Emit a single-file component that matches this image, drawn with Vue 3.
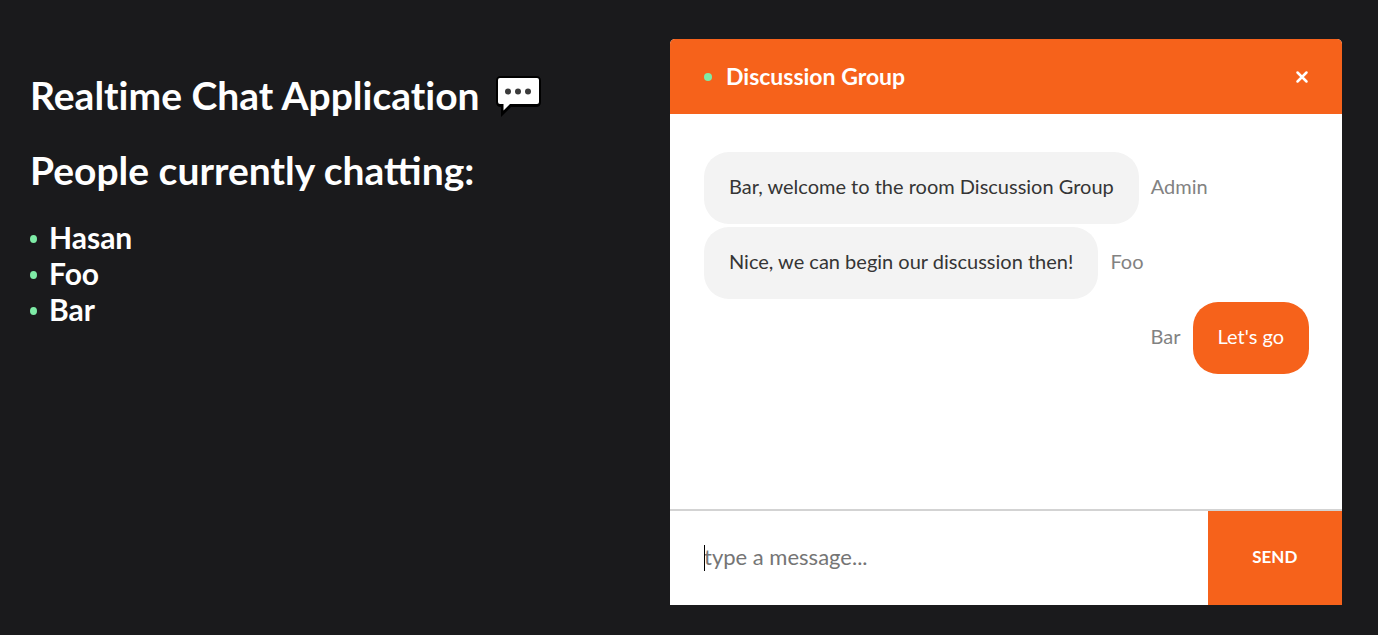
<script setup>
import { onMounted, ref } from 'vue'

const room = 'Discussion Group'
const me = 'Bar'
const people = ['Hasan', 'Foo', 'Bar']
const messages = [
  { user: 'Admin', text: 'Bar, welcome to the room Discussion Group' },
  { user: 'Foo', text: 'Nice, we can begin our discussion then!' },
  { user: 'Bar', text: "Let's go" }
]
const draft = ref('')
const field = ref(null)

onMounted(() => field.value.focus())
</script>

<template>
  <main class="page">
    <section class="info">
      <h1>
        Realtime Chat Application
        <svg class="bubble-icon" viewBox="0 -4 46 46" aria-hidden="true">
          <path d="M6 0H41Q46 0 46 5V26Q46 31 41 31H16L6 41V31Q1 31 1 26V5Q1 0 6 0Z" fill="#000" />
          <path d="M5 2H42Q44 2 44 4V26Q44 28 42 28H15L8.500 34.500V28H5Q3 28 3 26V4Q3 2 5 2Z" fill="#fff" />
          <circle cx="13" cy="15.500" r="3" fill="#3b3b3b" />
          <circle cx="23" cy="15.500" r="3" fill="#3b3b3b" />
          <circle cx="33" cy="15.500" r="3" fill="#3b3b3b" />
        </svg>
      </h1>
      <h2>People currently chatting:</h2>
      <ul class="people">
        <li v-for="name in people" :key="name"><i class="dot"></i>{{ name }}</li>
      </ul>
    </section>

    <section class="chat">
      <header class="bar">
        <i class="dot"></i>
        <h3>{{ room }}</h3>
        <a href="#" class="close" aria-label="Close">
          <svg viewBox="0 0 14 14"><path d="M2.500 2.500L11.500 11.500M11.500 2.500L2.500 11.500" /></svg>
        </a>
      </header>
      <div class="messages">
        <div v-for="m in messages" :key="m.text" class="message" :class="{ mine: m.user === me }">
          <p class="bubble">{{ m.text }}</p>
          <p class="sender">{{ m.user }}</p>
        </div>
      </div>
      <form class="composer" @submit.prevent="draft = ''">
        <div class="field">
          <span v-if="!draft" class="caret"></span>
          <input ref="field" v-model="draft" type="text" placeholder="type a message..." aria-label="Message" />
        </div>
        <button type="submit">SEND</button>
      </form>
    </section>
  </main>
</template>

<style>
body {
  background: #1a1a1c;
}
</style>

<style scoped>
* {
  box-sizing: border-box;
}
.page {
  display: grid;
  grid-template-columns: 20fr 21fr;
  min-height: 100vh;
  padding: 39px 36px 30px 30px;
  color: #fff;
  font-family: Lato, "Liberation Sans", sans-serif;
}
h1, h2, h3, p, ul {
  margin: 0;
}
.info {
  padding-top: 32px;
}
h1, h2 {
  font-size: 39px;
  line-height: 48px;
  font-weight: 700;
}
h1 {
  display: flex;
  align-items: center;
  gap: 15px;
  font-variant-ligatures: no-common-ligatures;
}
h2 {
  margin-top: 27px;
}
.bubble-icon {
  width: 46px;
  height: 46px;
}
.people {
  margin-top: 25px;
  padding: 0;
  list-style: none;
  font-size: 30px;
  line-height: 36px;
  font-weight: 700;
}
.people li {
  display: flex;
  align-items: center;
  gap: 12px;
}
.dot {
  width: 8px;
  height: 8px;
  border-radius: 50%;
  background: #7eeba6;
}
.people .dot {
  width: 7px;
  margin-top: 3px;
}
.chat {
  display: flex;
  flex-direction: column;
  border-radius: 5px 5px 0 0;
  overflow: hidden;
  background: #fff;
}
.bar {
  display: flex;
  align-items: center;
  height: 75px;
  padding: 0 33px 0 34px;
  background: #f6621b;
}
h3 {
  margin-left: 14px;
  padding-bottom: 2px;
  font-size: 23px;
  line-height: 28px;
}
.close {
  display: flex;
  margin-left: auto;
}
.close svg {
  width: 14px;
  height: 14px;
  fill: none;
  stroke: #fff;
  stroke-width: 2.500;
  stroke-linecap: round;
}
.messages {
  flex: 1;
  display: flex;
  flex-direction: column;
  gap: 3px;
  padding: 38px 33px 38px 34px;
  font-size: 20px;
  line-height: 24px;
}
.message {
  display: flex;
  align-items: center;
  gap: 12px;
}
.mine {
  flex-direction: row-reverse;
}
.bubble {
  padding: 22px 25px 26px;
  border-radius: 25px;
  background: #f3f3f3;
  color: #353535;
}
.mine .bubble {
  background: #f6621b;
  color: #fff;
}
.sender {
  padding-bottom: 4px;
  color: #828282;
}
.composer {
  display: flex;
  height: 96px;
  border-top: 2px solid #d3d3d3;
}
.field {
  position: relative;
  flex: 4;
  display: flex;
  align-items: center;
}
.caret {
  position: absolute;
  left: 34px;
  width: 1px;
  height: 26px;
  background: #000;
}
input {
  flex: 1;
  min-width: 0;
  height: 100%;
  padding: 0 34px 3px;
  border: 0;
  outline: 0;
  background: none;
  color: #353535;
  font: inherit;
  font-size: 22px;
}
input:placeholder-shown {
  caret-color: transparent;
}
input::placeholder {
  color: #757575;
}
button {
  flex: 1;
  padding: 0 0 3px;
  border: 0;
  background: #f6621b;
  color: #fff;
  font: inherit;
  font-size: 17px;
  font-weight: 700;
}
</style>
